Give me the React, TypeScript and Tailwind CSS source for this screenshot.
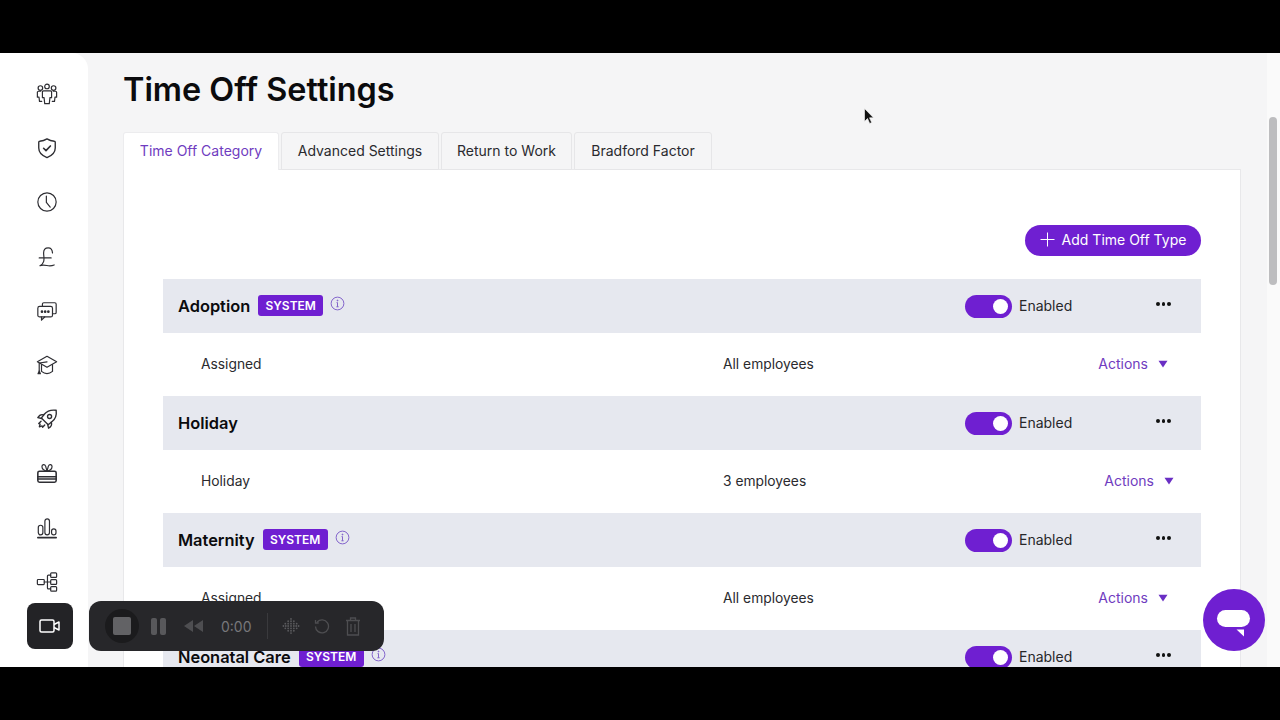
import React from "react";

const S = ({ children, w = 22 }: { children: React.ReactNode; w?: number }) => (
  <svg width={w} height={w} viewBox="0 0 24 24" fill="none" stroke="#2e2e33" strokeWidth={1.3} strokeLinecap="round" strokeLinejoin="round">
    {children}
  </svg>
);

const icons = [
  <S key="a">
    <circle cx="12" cy="3.800" r="2.500" /><circle cx="4.800" cy="5.500" r="2.500" /><circle cx="19.200" cy="5.500" r="2.500" />
    <path d="M8.200 8.500h7.600c.8 0 1.200.5 1.200 1.200v6.300h-1.800l-.7 6.500H9.500L8.800 16H7V9.700c0-.7.400-1.200 1.200-1.200z" />
    <path d="M5.200 9H2.800C2 9 1.500 9.500 1.500 10.200V15.500h1.800l.5 4.500h2.500" /><path d="M18.800 9h2.400c.8 0 1.300.5 1.300 1.200v5.300h-1.800l-.5 4.500h-2.500" />
  </S>,
  <S key="b">
    <path d="M12 2c2.300 1.500 5 2.400 8 2.600.6 0 1 .4 1 1V12c0 5-4 8.500-9 10.500C7 20.500 3 17 3 12V5.600c0-.6.400-1 1-1 3-.2 5.700-1.100 8-2.600z" strokeWidth={1.500} />
    <path d="M8.300 12.300l2.600 2.500 4.800-5" strokeWidth={1.800} />
  </S>,
  <S key="c"><circle cx="12" cy="12" r="10" /><path d="M11.300 5.500v7l4.200 5" /></S>,
  <S key="d"><path d="M18 7.500C17.800 4.200 16 2 13.300 2 10.300 2 8.300 4.200 8.300 7.500c0 3.500 1 6.500 0 9.500-.5 1.800-1.700 3.300-4 4.500 2.300-1 4.500-.8 7.500-.2 2.500.5 5.500.5 8-.6M3.500 13h13" /></S>,
  <S key="e">
    <path d="M7 7V4.500c0-1 .6-1.500 1.500-1.500h12c1 0 1.500.6 1.500 1.500v9c0 1-.5 1.500-1.500 1.500H18" />
    <rect x="2" y="7" width="16" height="11.500" rx="2" />
    <path d="M6 18.500v3.500l3.500-3.500" />
    <circle cx="6.500" cy="12.700" r=".8" fill="#2e2e33" /><circle cx="10" cy="12.700" r=".8" fill="#2e2e33" /><circle cx="13.500" cy="12.700" r=".8" fill="#2e2e33" />
  </S>,
  <S key="f">
    <path d="M12 2.500L1.500 8.500 12 14.500l10.500-6z" />
    <path d="M6 11.500v7.500c2 1.700 4 2.500 6 2.500s4-.8 6-2.500v-7.500" />
    <path d="M12 8.500l-8.500 1.300v8.700" />
    <path d="M3.500 18.500l-1.300 3h2.600z" />
  </S>,
  <S key="g">
    <path d="M22 2.500c-5.500-.8-10 .8-13 4.300L5.800 11l7.500 7.300 4.300-3.500C21 12 22.700 8 22 2.500z" strokeWidth={1.500} />
    <circle cx="14.800" cy="9.300" r="2.200" strokeWidth={1.500} />
    <path d="M8.500 7.500C5.500 6.500 3.500 7.800 2 10.500l4.200 1M16.700 15.500c1 3-.3 5-3 6.500l-1-4.200" strokeWidth={1.500} />
    <path d="M5.500 14.500L3 17l1.500.5-.8 3 3-1 .5 1.500 2.300-2.500" strokeWidth={1.500} />
  </S>,
  <S key="h">
    <rect x="2" y="10" width="20" height="12" rx="1.800" strokeWidth={1.700} />
    <path d="M2 16h20M2 18.500h20" strokeWidth={1.700} />
    <path d="M12 10C9 9.500 6.500 8 6.500 5 6.500 2.500 9.500 2 10.500 4.500L12 10zm0 0c3-.5 5.500-2 5.500-5 0-2.500-3-3-4-.5L12 10z" />
  </S>,
  <S key="i">
    <rect x="2.500" y="9" width="5" height="10.500" rx="2.500" /><rect x="9.700" y="2" width="5" height="17.500" rx="2.500" /><rect x="17" y="13" width="4.800" height="6.500" rx="2.400" />
    <path d="M2 22.500h20" strokeWidth={1.800} />
  </S>,
  <S key="j">
    <rect x="1.500" y="9.300" width="7.500" height="5.500" rx=".8" /><rect x="16" y="2" width="6.500" height="5" rx="1" /><rect x="16" y="9.500" width="6.500" height="5" rx="1" /><rect x="16" y="17" width="6.500" height="5" rx="1" />
    <path d="M9 12h7M12.500 5.500v13c0 .6.400 1 1 1H16M12.500 5.500c0-.6.400-1 1-1H16" />
  </S>,
];

const Info = () => (
  <svg width="15" height="15" viewBox="0 0 16 16" fill="none" stroke="#7d5cc9" strokeWidth="1">
    <circle cx="8" cy="8" r="6.800" />
    <path d="M8 7v4.500M6.800 11.500h2.400M7 7h1" />
    <circle cx="8" cy="4.800" r=".5" fill="#7d5cc9" />
  </svg>
);

const Dot = () => <i className="h-[3.500px] w-[3.500px] rounded-full bg-[#111]" />;

const Head = ({ name, system }: { name: string; system?: boolean }) => (
  <div className="flex h-[54px] items-center bg-[#e6e8ef] pl-[15px]">
    <div className="flex flex-1 items-center">
      <span className="text-[16.400px] font-semibold text-[#0b0b0d]">{name}</span>
      {system && (
        <>
          <span className="ml-[8px] flex h-[21px] w-[65px] items-center justify-center rounded-[3px] bg-[#6f1fd1] text-[12px] font-semibold text-white">SYSTEM</span>
          <span className="ml-[7px] flex -translate-y-[2px]"><Info /></span>
        </>
      )}
    </div>
    <div className="flex w-[236px] items-center">
      <div className="flex h-[23px] w-[47px] items-center justify-end rounded-full bg-[#6f1fd1] pr-[4px]">
        <div className="h-[15px] w-[15px] rounded-full bg-white" />
      </div>
      <span className="ml-[7px] w-[53px] -translate-y-px text-[14px] text-[#27272a]">Enabled</span>
      <div className="ml-[84px] flex -translate-y-[2px] gap-[2px]">
        <Dot /><Dot /><Dot />
      </div>
    </div>
  </div>
);

const Sub = ({ label, who, pr }: { label: string; who: string; pr: string }) => (
  <div className={"flex h-[63px] items-center pb-[2px] pl-[38px] text-[13.800px] leading-[20px] text-[#2a2a2e] " + pr}>
    <span className="w-[522px]">{label}</span>
    <span className="flex-1">{who}</span>
    <span className="text-[14px] leading-[20px] text-[#6f3cc0]">Actions</span>
    <svg className="ml-[10px]" width="10" height="8" viewBox="0 0 10 8"><path d="M.5 .8h9L5 7.500z" fill="#6a2fc4" /></svg>
  </div>
);

const grid = [[9,2],[6,4.500],[9,4.500],[12,4.500],[3,7],[6,7],[9,7],[12,7],[15,7],[1,9.500],[3.500,9.500],[6,9.500],[9,9.500],[12,9.500],[14.500,9.500],[17,9.500],[3,12],[6,12],[9,12],[12,12],[15,12],[6,14.500],[9,14.500],[12,14.500],[9,17]];

export default function App() {
  return (
    <div className="relative flex h-[720px] w-[1280px] flex-col overflow-hidden bg-black font-['Inter',sans-serif]">
      <div className="h-[53px] shrink-0 bg-black" />
      <div className="flex h-[614px] overflow-hidden bg-[#f5f5f6]">
        <aside className="flex w-[88px] shrink-0 flex-col items-center gap-[32.200px] overflow-hidden rounded-tr-2xl bg-white pl-[6px] pt-[30px]">
          {icons.map((ic, i) => <div key={i} className="flex h-[22px] w-[22px] shrink-0 items-center justify-center">{ic}</div>)}
        </aside>
        <main className="flex-1 overflow-hidden pl-[35px]">
          <h1 className="pt-[17px] text-[32.400px] font-semibold leading-[40px] text-[#0b0b0d]">Time Off Settings</h1>
          <div className="mt-[22px] flex h-[38px] w-[1118px] gap-[2px] pb-px text-[14px] text-[#2a2a2e]">
            <div className="z-10 flex h-[38px] w-[156px] items-center justify-center rounded-t-[3px] border border-b-0 border-[#ececee] bg-white pb-[2px] text-[#6f3cc0]">Time Off Category</div>
            <div className="flex h-[38px] w-[158px] items-center justify-center rounded-t-[3px] border border-[#e6e6e8] pb-[2px]">Advanced Settings</div>
            <div className="flex h-[38px] w-[131px] items-center justify-center rounded-t-[3px] border border-[#e6e6e8] pb-[2px]">Return to Work</div>
            <div className="flex h-[38px] w-[138px] items-center justify-center rounded-t-[3px] border border-[#e6e6e8] pb-[2px]">Bradford Factor</div>
          </div>
          <section className="-mt-px w-[1118px] border border-[#e8e8ea] bg-white px-[39px] pb-4 pt-[55px]">
            <div className="flex justify-end">
              <button className="flex h-[31px] w-[176px] items-center justify-center gap-[7px] rounded-full bg-[#6f1fd1] pb-[2px] text-[14px] text-white">
                <svg width="15" height="15" viewBox="0 0 15 15" stroke="white" strokeWidth="1"><path d="M7.500 .5v14M.5 7.500h14" /></svg>
                Add Time Off Type
              </button>
            </div>
            <div className="mt-[23px]">
              <Head name="Adoption" system />
              <Sub label="Assigned" who="All employees" pr="pr-[33px]" />
              <Head name="Holiday" />
              <Sub label="Holiday" who="3 employees" pr="pr-[27px]" />
              <Head name="Maternity" system />
              <Sub label="Assigned" who="All employees" pr="pr-[33px]" />
              <Head name="Neonatal Care" system />
            </div>
          </section>
        </main>
        <div className="relative w-[13px] shrink-0 bg-[#fafafa]">
          <div className="absolute left-[2px] top-[64px] h-[168px] w-[8px] rounded-full bg-[#bdbdbf]" />
        </div>
      </div>
      <div className="flex-1 bg-black" />

      {/* screen recorder overlay */}
      <div className="absolute left-[27px] top-[603px] flex h-[46px] w-[46px] items-center justify-center rounded-lg bg-[#232326]">
        <svg width="22" height="16" viewBox="0 0 22 16" fill="none" stroke="white" strokeWidth="1.500" strokeLinejoin="round"><rect x="1" y="2" width="14" height="12" rx="1.500" /><path d="M15 6.500l5-2.500v8l-5-2.500" /></svg>
      </div>
      <div className="absolute left-[89px] top-[601px] flex h-[50px] w-[295px] items-center rounded-xl bg-[#27272a] text-[#77777b]">
        <div className="ml-[16px] flex h-[34px] w-[34px] items-center justify-center rounded-full bg-[#1b1b1d]">
          <div className="h-[18px] w-[18px] rounded-[2px] bg-[#626265]" />
        </div>
        <div className="ml-[12px] flex gap-[3px]"><i className="h-[17px] w-[6px] rounded-[2px] bg-[#58585b]" /><i className="h-[17px] w-[6px] rounded-[2px] bg-[#58585b]" /></div>
        <svg className="ml-[17px]" width="20" height="12" viewBox="0 0 20 12" fill="#4e4e51"><path d="M10 0v12L1 6zM20 0v12l-9-6z" /></svg>
        <span className="ml-[18px] w-[30px] text-[14px]">0:00</span>
        <div className="ml-[16px] h-[26px] w-px bg-[#3a3a3d]" />
        <svg className="ml-[14px]" width="18" height="18" viewBox="0 0 18 19" fill="#5a5a5d">
          {grid.map(([x, y], i) => <circle key={i} cx={x} cy={y} r=".95" />)}
        </svg>
        <svg className="ml-[14px]" width="16" height="16" viewBox="0 0 16 16" fill="none" stroke="#4e4e51" strokeWidth="1.300"><path d="M3.200 4A6.500 6.500 0 1 1 1.500 8.500M1.500 2v3h3.200" /></svg>
        <svg className="ml-[15px]" width="16" height="20" viewBox="0 0 16 20" fill="none" stroke="#4e4e51" strokeWidth="1.300"><path d="M1 4.500h14M5.500 4.500V2h5v2.500M2.500 4.500V19h11V4.500M6 8v8M10 8v8" /></svg>
      </div>
      <div className="absolute left-[1203px] top-[589px] h-[62px] w-[62px] rounded-full bg-[#6f1fd1]">
        <svg width="62" height="62" viewBox="0 0 62 62" fill="white"><rect x="14" y="21" width="33" height="17" rx="8.500" /><path d="M33.500 40.500h7.500v7z" /></svg>
      </div>
      <svg className="absolute left-[864px] top-[108px]" width="10" height="16" viewBox="0 0 10 16"><path d="M.5 .5v13l3-3 2.200 5 2-1-2.200-4.700h4z" fill="#111" stroke="#fff" strokeWidth=".6" /></svg>
    </div>
  );
}
